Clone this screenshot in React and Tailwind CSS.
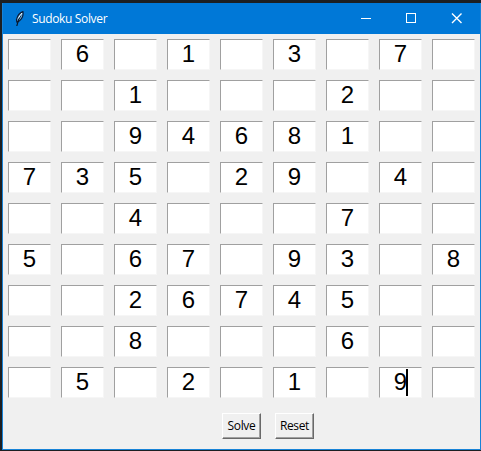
import React from "react";

const rows = [
  " 6 1 3 7 ",
  "  1   2  ",
  "  94681  ",
  "735 29 4 ",
  "  4   7  ",
  "5 67 93 8",
  "  26745  ",
  "  8   6  ",
  " 5 2 1 9 ",
];

function Feather() {
  return (
    <svg className="ml-[12px] mt-px h-4 w-[10px]" viewBox="0 0 10 16" fill="none">
      <path d="M7.9 .6C5.2 1.6 2.4 4.6 1.5 8.6L1.8 11L3.8 10.4C6.6 8.2 8.6 4.2 7.9.6Z" fill="#6fb2e0" stroke="#0b1c38" strokeWidth="1.2" />
      <path d="M5.9 4C4 7 2.8 10 1.8 15" stroke="#071526" strokeWidth="1.2" />
      <path d="M6.9 2L3.2 7.500" stroke="#e8f7ff" strokeWidth="1" />
    </svg>
  );
}

function TitleBar() {
  return (
    <div className="flex h-[31px] shrink-0 items-center bg-[#0078d7]">
      <Feather />
      <span className="ml-[7px] grow whitespace-nowrap text-[12px] leading-4 tracking-[-0.35px] text-white">Sudoku Solver</span>
      <svg className="mr-[18px] h-[11px] w-[101px]" viewBox="0 0 101 11" fill="none" stroke="#fff">
        <path d="M0 5.5H10" />
        <rect x="45.5" y=".5" width="9" height="9" />
        <path d="M91 .5L100.500 10M100.500 .5L91 10" strokeWidth="1.4" />
      </svg>
    </div>
  );
}

function Cell({ value, focused }) {
  return (
    <div className="relative flex h-[31px] w-[43px] justify-center border border-b-[#f6f6f6] border-l-[#a0a0a0] border-r-[#f6f6f6] border-t-[#a0a0a0] bg-white font-['Liberation_Sans',Arial,sans-serif] text-[24px] leading-[27px] text-black">
      {value.trim()}
      {focused && <i className="absolute left-[26px] top-px h-[27px] w-[2px] bg-black" />}
    </div>
  );
}

function Button({ children }) {
  return (
    <button className="h-[26px] w-[39px] border border-b-[#696969] border-l-white border-r-[#696969] border-t-white bg-[#f0f0f0] text-[12px] leading-4 tracking-[-0.35px] text-black">
      <span className="flex h-full items-center justify-center whitespace-nowrap border-b border-r border-[#a0a0a0] pl-px">
        {children}
      </span>
    </button>
  );
}

export default function App() {
  return (
    <div className="h-[451px] w-[481px] bg-[#1c1f22] pb-px pl-[2px] pt-[3px] font-['Open_Sans','Noto_Sans',sans-serif]">
      <div className="flex h-full flex-col border-x border-b border-[#1883d7] bg-[#f0f0f0]">
        <TitleBar />
        <div className="ml-[5px] mt-[5px] grid w-[467px] grid-cols-9 gap-x-[10px] gap-y-[10px]">
          {rows.map((row, r) =>
            row.split("").map((v, c) => (
              <Cell key={`${r}-${c}`} value={v} focused={r === 8 && c === 7} />
            ))
          )}
        </div>
        <div className="ml-[219px] mt-[15px] flex gap-[14px]">
          <Button>Solve</Button>
          <Button>Reset</Button>
        </div>
      </div>
    </div>
  );
}
